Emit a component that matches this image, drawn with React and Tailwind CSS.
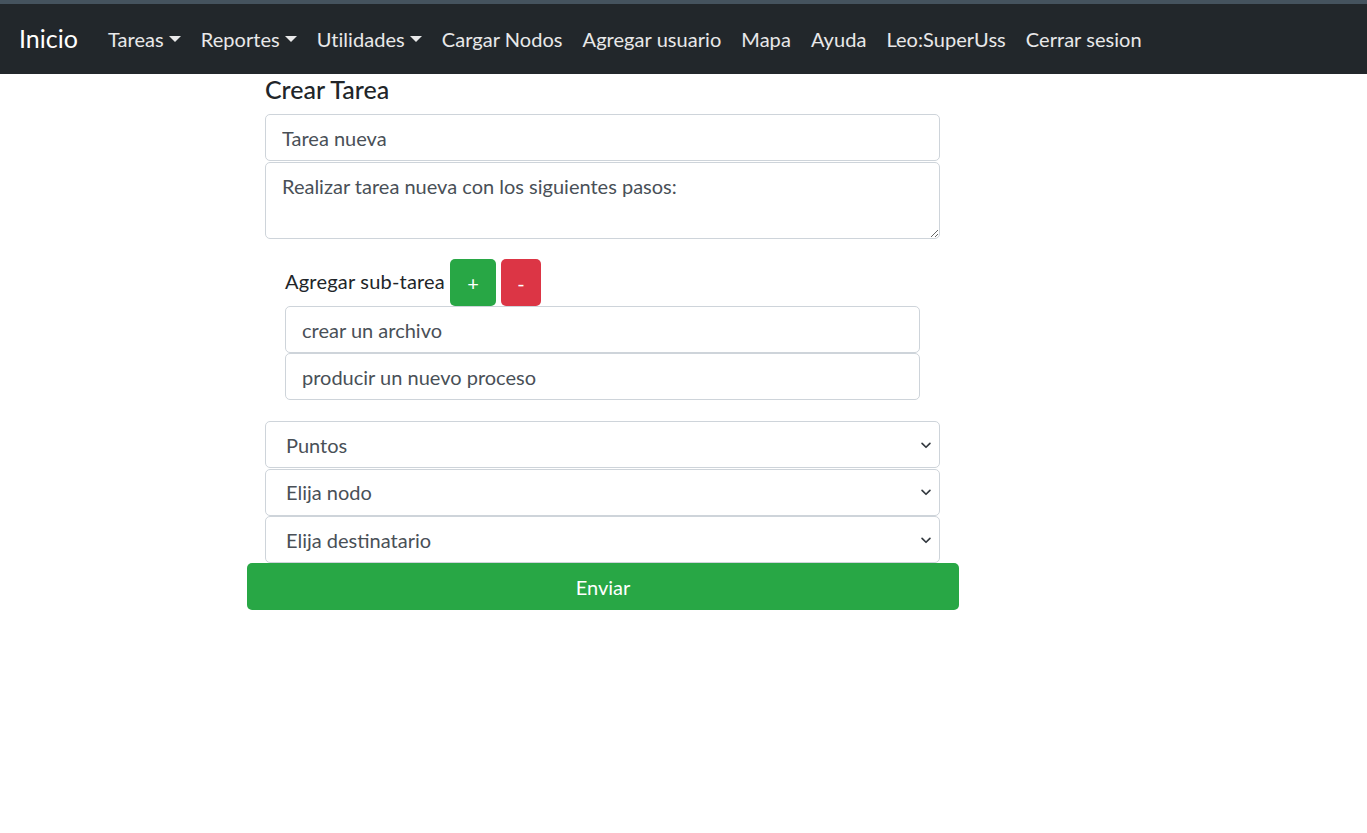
import React from "react";

const font = { fontFamily: "'Lato', 'Liberation Sans', sans-serif" };

const NavLink = ({ children, caret }) => (
  <a className="flex items-center px-[10px] text-[20px] text-white/90 whitespace-nowrap tracking-[0.05px]">
    {children}
    {caret && (
      <span className="ml-[5px] inline-block w-0 h-0 border-l-[6px] border-r-[6px] border-t-[6px] border-l-transparent border-r-transparent border-t-white/90" />
    )}
  </a>
);

const inputCls =
  "block w-full h-[47px] px-[16px] border border-[#ced4da] rounded-[5px] bg-white text-[20px] text-[#495057] outline-none";

const Chevron = () => (
  <svg
    className="pointer-events-none absolute right-[5px] top-1/2 -translate-y-1/2"
    width="18"
    height="18"
    viewBox="0 0 16 16"
  >
    <path d="M4.5 6.5 8 10l3.5-3.5" fill="none" stroke="#343a40" strokeWidth="1.5" strokeLinecap="round" strokeLinejoin="round" />
  </svg>
);

const Select = ({ label }) => (
  <div className="relative">
    <select className={inputCls + " appearance-none pl-[20px]"} defaultValue="">
      <option value="">{label}</option>
    </select>
    <Chevron />
  </div>
);

export default function App() {
  return (
    <div className="min-h-screen bg-white" style={font}>
      {/* barra superior */}
      <div className="h-[4px] bg-[#45535e]" />
      <nav className="h-[70px] bg-[#22272b] flex items-center px-[19px]">
        <a className="text-[25px] text-white mr-[20px]">Inicio</a>
        <div className="flex items-center">
          <NavLink caret>Tareas</NavLink>
          <NavLink caret>Reportes</NavLink>
          <NavLink caret>Utilidades</NavLink>
          <NavLink>Cargar Nodos</NavLink>
          <NavLink>Agregar usuario</NavLink>
          <NavLink>Mapa</NavLink>
          <NavLink>Ayuda</NavLink>
          <NavLink>Leo:SuperUss</NavLink>
          <NavLink>Cerrar sesion</NavLink>
        </div>
      </nav>

      <div className="ml-[247px] w-[712px]">
        <div className="pl-[18px] pr-[19px]">
          <h5 className="text-[25px] leading-[30px] font-medium text-[#212529] mb-[10px]">Crear Tarea</h5>
          <input className={inputCls} defaultValue="Tarea nueva" />
          <textarea
            className="block w-full h-[77px] mt-px px-[16px] py-[8px] border border-[#ced4da] rounded-[5px] text-[20px] leading-[30px] text-[#495057] outline-none"
            defaultValue="Realizar tarea nueva con los siguientes pasos:"
          />

          {/* sub-tareas */}
          <div className="px-[20px] mt-[20px] mb-[21px]">
            <div className="flex items-end gap-[5px]">
              <span className="text-[20px] text-[#212529] leading-[30px] mb-[10px] tracking-[0.2px]">Agregar sub-tarea</span>
              <button className="h-[47px] w-[46px] rounded-[5px] bg-[#28a745] text-white text-[20px]">+</button>
              <button className="h-[47px] w-[40px] rounded-[5px] bg-[#dc3545] text-white text-[20px]">-</button>
            </div>
            <input className={inputCls} defaultValue="crear un archivo" />
            <input className={inputCls} defaultValue="producir un nuevo proceso" />
          </div>

          <div className="flex flex-col gap-[0.5px]">
            <Select label="Puntos" />
            <Select label="Elija nodo" />
            <Select label="Elija destinatario" />
          </div>
        </div>
        <button className="w-full h-[47px] rounded-[5px] bg-[#28a745] text-white text-[20px]">Enviar</button>
      </div>
    </div>
  );
}
